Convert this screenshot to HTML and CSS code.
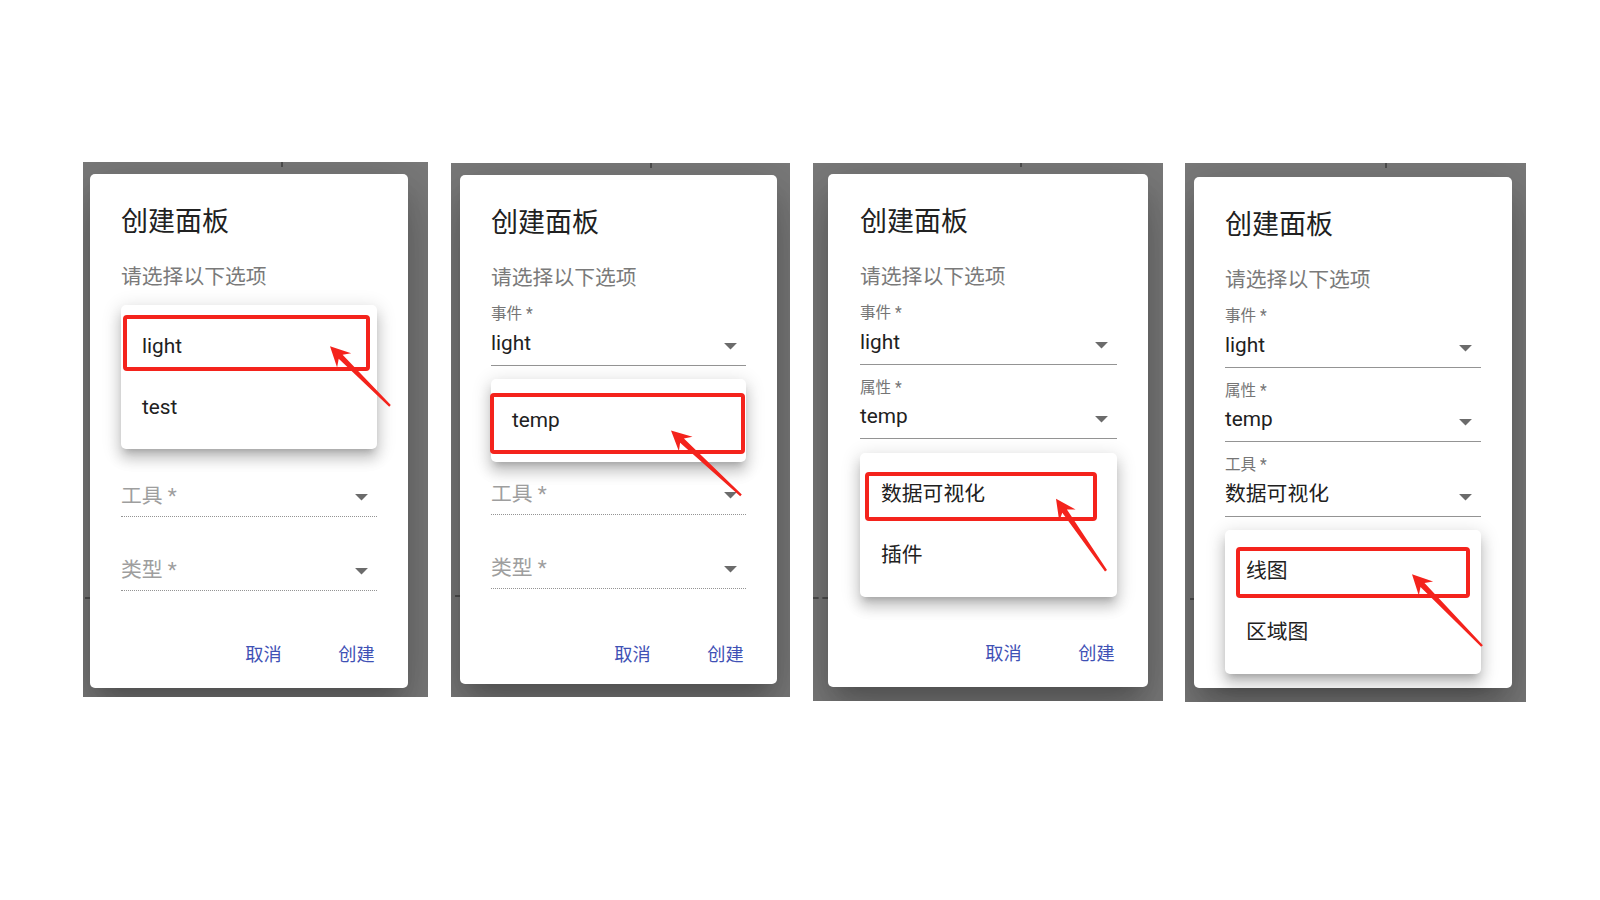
FILE: index.html
```html
<!DOCTYPE html>
<html lang="zh-CN">
<head>
  <meta charset="UTF-8">
  <meta name="viewport" content="width=device-width, initial-scale=1.0">
  <title>创建面板</title>
  <link rel="stylesheet" href="styles.css">
</head>
<body>
  <div class="board">

    <!-- step 1: pick the event -->
    <div class="shot shot-1">
      <span class="tick tick-top"></span>
      <span class="tick tick-side"></span>
      <div class="dialog">
        <h2 class="dialog-title">创建面板</h2>
        <p class="dialog-text">请选择以下选项</p>
        <div class="fields">
          <!-- fields hidden behind the open list -->
          <div class="field is-covered"></div>
          <div class="field is-covered"></div>
          <div class="field is-empty">
            <div class="field-input">工具 *<svg class="caret" viewBox="0 0 24 24"><path d="M7 10l5 5 5-5z"/></svg></div>
          </div>
          <div class="field is-empty">
            <div class="field-input">类型 *<svg class="caret" viewBox="0 0 24 24"><path d="M7 10l5 5 5-5z"/></svg></div>
          </div>
          <div class="menu menu-1">
            <div class="menu-item">light</div>
            <div class="menu-item">test</div>
            <span class="mark mark-1"></span>
          </div>
        </div>
        <div class="actions">
          <button type="button">取消</button>
          <button type="button">创建</button>
        </div>
      </div>
      <svg class="arrow"><polygon points="247,184.2 254.1,205.4 255.7,196.8 306.2,244.7 307.8,242.9 259.6,192.8 268.2,191.2"/></svg>
    </div>

    <!-- step 2: pick the property -->
    <div class="shot shot-2">
      <span class="tick tick-top"></span>
      <span class="tick tick-side"></span>
      <div class="dialog">
        <h2 class="dialog-title">创建面板</h2>
        <p class="dialog-text">请选择以下选项</p>
        <div class="fields">
          <div class="field">
            <label class="field-label">事件 *</label>
            <div class="field-input">light<svg class="caret" viewBox="0 0 24 24"><path d="M7 10l5 5 5-5z"/></svg></div>
          </div>
          <div class="field is-covered"></div>
          <div class="field is-empty">
            <div class="field-input">工具 *<svg class="caret" viewBox="0 0 24 24"><path d="M7 10l5 5 5-5z"/></svg></div>
          </div>
          <div class="field is-empty">
            <div class="field-input">类型 *<svg class="caret" viewBox="0 0 24 24"><path d="M7 10l5 5 5-5z"/></svg></div>
          </div>
          <div class="menu menu-2">
            <div class="menu-item">temp</div>
            <span class="mark mark-2"></span>
          </div>
        </div>
        <div class="actions">
          <button type="button">取消</button>
          <button type="button">创建</button>
        </div>
      </div>
      <svg class="arrow"><polygon points="220,267.4 227.9,288.3 229.1,279.7 289.2,333.2 290.8,331.4 232.9,275.6 241.5,273.7"/></svg>
    </div>

    <!-- step 3: pick the tool -->
    <div class="shot shot-3">
      <span class="tick tick-top"></span>
      <span class="tick tick-side"></span>
      <div class="dialog">
        <h2 class="dialog-title">创建面板</h2>
        <p class="dialog-text">请选择以下选项</p>
        <div class="fields">
          <div class="field">
            <label class="field-label">事件 *</label>
            <div class="field-input">light<svg class="caret" viewBox="0 0 24 24"><path d="M7 10l5 5 5-5z"/></svg></div>
          </div>
          <div class="field">
            <label class="field-label">属性 *</label>
            <div class="field-input">temp<svg class="caret" viewBox="0 0 24 24"><path d="M7 10l5 5 5-5z"/></svg></div>
          </div>
          <div class="field is-covered"></div>
          <div class="field is-covered"></div>
          <div class="menu menu-3">
            <div class="menu-item">数据可视化</div>
            <div class="menu-item">插件</div>
            <span class="mark mark-3"></span>
          </div>
        </div>
        <div class="actions">
          <button type="button">取消</button>
          <button type="button">创建</button>
        </div>
      </div>
      <svg class="arrow"><polygon points="243,335.8 246.2,357.9 249.3,349.7 292,408.4 294,407 253.9,346.5 262.6,346.5"/></svg>
    </div>

    <!-- step 4: pick the chart type -->
    <div class="shot shot-4">
      <span class="tick tick-top"></span>
      <span class="tick tick-side"></span>
      <div class="dialog">
        <h2 class="dialog-title">创建面板</h2>
        <p class="dialog-text">请选择以下选项</p>
        <div class="fields">
          <div class="field">
            <label class="field-label">事件 *</label>
            <div class="field-input">light<svg class="caret" viewBox="0 0 24 24"><path d="M7 10l5 5 5-5z"/></svg></div>
          </div>
          <div class="field">
            <label class="field-label">属性 *</label>
            <div class="field-input">temp<svg class="caret" viewBox="0 0 24 24"><path d="M7 10l5 5 5-5z"/></svg></div>
          </div>
          <div class="field">
            <label class="field-label">工具 *</label>
            <div class="field-input">数据可视化<svg class="caret" viewBox="0 0 24 24"><path d="M7 10l5 5 5-5z"/></svg></div>
          </div>
          <div class="field is-covered"></div>
          <div class="menu menu-4">
            <div class="menu-item">线图</div>
            <div class="menu-item">区域图</div>
            <span class="mark mark-4"></span>
          </div>
        </div>
        <div class="actions is-covered">
          <button type="button"></button>
          <button type="button"></button>
        </div>
      </div>
      <svg class="arrow"><polygon points="227,411.2 233.8,432.5 235.5,423.9 296.1,483.8 297.9,482.2 239.5,420 248.1,418.5"/></svg>
    </div>

  </div>
</body>
</html>
```

FILE: styles.css
```css
body {
    margin: 0;
    background-color: #fff;
    font-family: 'Roboto', 'Noto Sans CJK SC', sans-serif;
    color: #212121;
}

.board {
    display: flex;
    align-items: flex-start;
    gap: 23px;
    padding: 162px 0 0 83px;
}

/* each screenshot: grey backdrop around a dialog */
.shot {
    position: relative;
    flex: none;
    background-color: #7a7a7a;
    overflow: hidden;
}

.shot-1 { padding: 12px 20px 9px 7px; }
.shot-2 { margin-top: 1px; padding: 12px 13px 13px 9px; }
.shot-3 { margin-top: 1px; padding: 11px 15px 14px 15px; }
.shot-4 { margin-top: 1px; margin-left: -1px; padding: 14px 14px 14px 9px; }

.tick {
    position: absolute;
    background-color: #4f4f4f;
}

.tick-top {
    top: 0;
    width: 2px;
    height: 5px;
}

.tick-side {
    width: 6px;
    height: 2px;
}

.shot-1 .tick-top { left: 198px; }
.shot-1 .tick-side { left: 2px; top: 435px; }
.shot-2 .tick-top { left: 199px; }
.shot-2 .tick-side { left: 4px; top: 432px; }
.shot-3 .tick-top { left: 207px; height: 4px; }
.shot-3 .tick-side {
    left: 0;
    top: 434px;
    width: 15px;
    height: 0;
    background: none;
    border-top: 2px dashed #4f4f4f;
}
.shot-4 .tick-top { left: 200px; }
.shot-4 .tick-side { left: 5px; top: 435px; width: 4px; }

.dialog {
    position: relative;
    width: 256px;
    padding: 31.5px 31px 0;
    background-color: #fff;
    border-radius: 5px;
    box-shadow: 0 14px 20px -9px rgba(0, 0, 0, 0.2),
                0 31px 49px 4px rgba(0, 0, 0, 0.14),
                0 12px 60px 10px rgba(0, 0, 0, 0.12);
}

.shot-1 .dialog { height: 482.5px; }
.shot-2 .dialog { height: 477.5px; width: 255px; }
.shot-3 .dialog { height: 481.5px; width: 257px; padding-left: 32px; }
.shot-4 .dialog { height: 479.5px; }

.dialog-title {
    margin: 0;
    font-size: 27px;
    font-weight: 400;
    line-height: 32px;
}

.dialog-text {
    margin: 25px 0 0;
    font-size: 20.8px;
    line-height: 28px;
    color: #7a7a7a;
}

.fields {
    position: relative;
    margin-top: 12.8px;
}

.shot-1 .fields { margin-top: 15.8px; }

.field {
    margin-bottom: 13px;
}

.field.is-empty {
    padding-top: 20px;
}

.field.is-covered {
    height: 61.5px;
}

.field-label {
    display: block;
    height: 20px;
    font-size: 15.6px;
    line-height: 20px;
    color: #757575;
}

.field-input {
    display: flex;
    justify-content: space-between;
    height: 25px;
    padding: 6.5px 0 9px;
    font-size: 20.8px;
    line-height: 25px;
    border-bottom: 1px solid #949494;
}

.is-empty .field-input {
    padding: 8.5px 0 7px;
    color: #9e9e9e;
    border-bottom-style: dotted;
}

.caret {
    flex: none;
    width: 31px;
    height: 31px;
    margin-top: -1px;
    fill: #6b6b6b;
}

.is-empty .caret {
    margin-top: -3px;
}

/* open select list */
.menu {
    position: absolute;
    left: 0;
    right: 0;
    padding: 10.5px 0;
    background-color: #fff;
    border-radius: 5px;
    box-shadow: 0 6px 7px -4px rgba(0, 0, 0, 0.2),
                0 10px 13px 1px rgba(0, 0, 0, 0.14),
                0 4px 18px 3px rgba(0, 0, 0, 0.12);
}

.menu-1 { top: -1.3px; }
.menu-2 { top: 75.2px; }
.menu-3 { top: 149.9px; }
.menu-4 { top: 224.1px; }

.menu-item {
    height: 61.5px;
    padding: 0 21px;
    font-size: 20.8px;
    line-height: 61.5px;
}

/* red highlight drawn on the screenshot */
.mark {
    position: absolute;
    box-sizing: border-box;
    border: 4px solid #f4231c;
    border-radius: 4px;
}

.mark-1 { left: 2px; top: 9.6px; width: 247px; height: 56px; }
.mark-2 { left: -1px; top: 14px; width: 255px; height: 60.4px; }
.mark-3 { left: 5px; top: 18.6px; width: 232px; height: 49px; }
.mark-4 { left: 11px; top: 16.8px; width: 234px; height: 50.5px; }

.arrow {
    position: absolute;
    left: 0;
    top: 0;
    width: 100%;
    height: 100%;
    fill: #f4231c;
    pointer-events: none;
}

.actions {
    display: flex;
    justify-content: flex-end;
    gap: 10px;
    margin: 44.2px -21px 0;
}

.shot-1 .actions { margin-top: 42.2px; }

.actions button {
    min-width: 83px;
    height: 40px;
    padding: 0 10px;
    border: none;
    background: none;
    font-family: inherit;
    font-size: 18.2px;
    color: #3f51b5;
}
```
